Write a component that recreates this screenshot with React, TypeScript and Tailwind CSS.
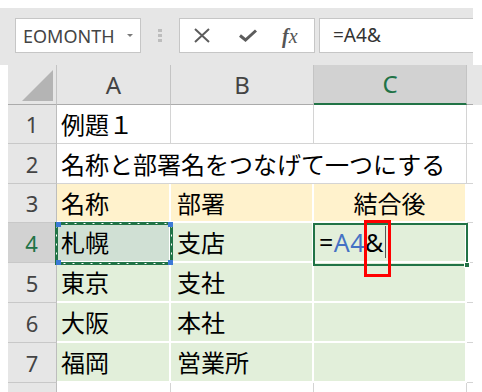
const GREEN = "#217346";

const CJK = "font-['Noto_Sans_CJK_JP','Noto_Sans',sans-serif]";
const UI = "font-['Noto_Sans','Open_Sans',sans-serif]";

type Row = {
  n: number;
  h: string;
  kind: "plain" | "head" | "data";
  a?: string;
  b?: string;
};

const rows: Row[] = [
  { n: 1, h: "h-[39px]", kind: "plain", a: "例題１" },
  { n: 2, h: "h-[40px]", kind: "plain" },
  { n: 3, h: "h-[39px]", kind: "head", a: "名称", b: "部署" },
  { n: 4, h: "h-[40px]", kind: "data", a: "札幌", b: "支店" },
  { n: 5, h: "h-[40px]", kind: "data", a: "東京", b: "支社" },
  { n: 6, h: "h-[40px]", kind: "data", a: "大阪", b: "本社" },
  { n: 7, h: "h-[40px]", kind: "data", a: "福岡", b: "営業所" },
];

const COLS = "grid grid-cols-[49px_114px_143px_153px_6px]";

const App = () => {
  return (
    <div className="relative w-[482px] h-[392px] overflow-hidden bg-white pt-2">
      <FormulaBar />
      <Sheet />
    </div>
  );
};

export default App;

/* ================= FORMULA BAR ================= */
const FormulaBar = () => {
  return (
    <div className="flex w-[473px] h-[57px] overflow-hidden bg-[#e6e6e6] pt-[10px]">
      <div className="ml-[15px] flex w-[126px] h-[35px] shrink-0 items-center border border-[#c6c6c6] bg-white pl-[7px]">
        <span className={`${UI} text-[18px] leading-none text-[#444]`}>EOMONTH</span>
        <span className="ml-auto mr-[7px] h-0 w-0 border-x-[3px] border-t-[3px] border-x-transparent border-t-[#7a7a7a]" />
      </div>

      <div className="flex w-[38px] h-[35px] shrink-0 flex-col items-center justify-center gap-[2px]">
        <span className="h-[3px] w-[4px] bg-[#bdbdbd]" />
        <span className="h-[3px] w-[4px] bg-[#bdbdbd]" />
        <span className="h-[3px] w-[4px] bg-[#bdbdbd]" />
      </div>

      <div className="flex w-[136px] h-[35px] shrink-0 items-center border border-[#c6c6c6] bg-white">
        <svg width="18" height="15" viewBox="0 0 18 15" className="ml-[13px]">
          <path d="M2 1 L16 14 M16 1 L2 14" stroke="#5c5c5c" strokeWidth="2" fill="none" />
        </svg>
        <svg width="20" height="13" viewBox="0 0 20 13" className="ml-[27px]">
          <path d="M2 6.5 L7.5 11 L18 1.5" stroke="#5c5c5c" strokeWidth="3" fill="none" />
        </svg>
        <span className="ml-[24px] font-['Liberation_Serif',serif] text-[20px] italic leading-none text-[#555]">
          <span className="font-bold">f</span>x
        </span>
      </div>

      <div className="ml-[4px] flex w-[170px] h-[35px] shrink-0 items-center border border-[#c6c6c6] bg-white pl-[13px]">
        <span className={`${UI} text-[19px] leading-none text-[#333]`}>=A4&amp;</span>
      </div>
    </div>
  );
};

/* ================= SHEET ================= */
const Sheet = () => {
  return (
    <div className="relative w-[482px] pl-2">
      <div className={`${COLS} h-[40px] bg-[#e6e6e6]`}>
        <div className="border-r border-b border-r-[#c4c4c4] border-b-[#ababab]">
          <svg width="48" height="39" viewBox="0 0 48 39">
            <polygon points="14,36 45,5 45,36" fill="#b4b4b4" />
          </svg>
        </div>
        <ColHead label="A" />
        <ColHead label="B" />
        <div className="flex items-center justify-center border-r border-r-[#c4c4c4] border-b-2 border-b-[#217346] bg-[#d2d2d2]">
          <span className={`${UI} text-[24px] leading-none text-[#217346]`}>C</span>
        </div>
        <div className="border-b border-b-[#ababab]" />
      </div>

      {rows.map((row) => (
        <SheetRow key={row.n} row={row} />
      ))}

      <div className={`${COLS} h-[12px]`}>
        <div className="border-r border-r-[#bdbdbd] bg-[#e6e6e6]" />
        <div className="border-r border-r-[#d4d4d4]" />
        <div className="border-r border-r-[#d4d4d4]" />
        <div className="border-r border-r-[#d4d4d4]" />
        <div />
      </div>

      {/* copy marquee on A4 */}
      <svg
        width="118"
        height="43"
        viewBox="0 0 118 43"
        className="absolute left-[55px] top-[157px]"
      >
        <rect x="1.5" y="1.5" width="115" height="40" fill="none" stroke={GREEN} strokeWidth="3" />
        <rect x="1.5" y="1.5" width="115" height="40" fill="none" stroke="#fff" strokeWidth="1" strokeDasharray="2 7" />
        <rect x="1" y="0" width="5" height="5" fill="#3b79d6" />
        <rect x="113" y="0" width="5" height="5" fill="#3b79d6" />
        <rect x="1" y="38" width="5" height="5" fill="#3b79d6" />
        <rect x="113" y="38" width="5" height="5" fill="#3b79d6" />
      </svg>

      {/* active cell C4 */}
      <div className="pointer-events-none absolute left-[313px] top-[158px] h-[43px] w-[155px] border-2 border-[#217346]">
        <span className="absolute -right-[4px] -bottom-[4px] h-[6px] w-[6px] border border-white bg-[#217346]" />
      </div>

      {/* highlight box */}
      <div className="pointer-events-none absolute left-[364px] top-[155px] h-[57px] w-[27px] border-[3px] border-[#ff0000]" />
    </div>
  );
};

const ColHead = ({ label }: { label: string }) => (
  <div className="flex items-center justify-center border-r border-b border-r-[#c4c4c4] border-b-[#ababab]">
    <span className={`${UI} text-[24px] leading-none text-[#444]`}>{label}</span>
  </div>
);

const SheetRow = ({ row }: { row: Row }) => {
  const active = row.n === 4;
  const fill =
    row.kind === "head" ? "bg-[#fff2cc]" : row.kind === "data" ? "bg-[#e2efda]" : "bg-white";
  const line =
    row.kind === "plain" ? "border-r border-b border-[#d4d4d4]" : "border-r-2 border-b-2 border-white";
  const text = `${CJK} text-[24px] leading-none text-black`;

  return (
    <div className={`${COLS} ${row.h}`}>
      <div
        className={`flex items-center justify-center border-b border-b-[#c8c8c8] ${
          active ? "border-r-2 border-r-[#217346] bg-[#d2d2d2]" : "border-r border-r-[#bdbdbd] bg-[#e6e6e6]"
        }`}
      >
        <span className={`${UI} text-[22px] leading-none ${active ? "text-[#217346]" : "text-[#444]"}`}>
          {row.n}
        </span>
      </div>

      {row.n === 2 ? (
        <div className={`col-span-3 flex items-center pl-[4px] ${line}`}>
          <span className={text}>名称と部署名をつなげて一つにする</span>
        </div>
      ) : (
        <>
          <div className={`flex items-center pl-[4px] ${active ? "bg-[#d0e0d4]" : fill} ${line}`}>
            <span className={text}>{row.a}</span>
          </div>
          <div className={`flex items-center pl-[6px] ${fill} ${line}`}>
            <span className={text}>{row.b}</span>
          </div>
          <div
            className={`flex items-center ${row.n === 3 ? "justify-center" : "pl-[5px]"} ${fill} ${line}`}
          >
            {row.n === 3 && <span className={text}>結合後</span>}
            {active && (
              <span className={`${UI} flex items-center text-[25px] tracking-[0.5px] leading-none text-black`}>
                =<span className="text-[#4472c4]">A4</span>&amp;
                <span className="ml-[1px] inline-block h-[32px] w-px bg-[#555]" />
              </span>
            )}
          </div>
        </>
      )}

      <div className="border-b border-b-[#d4d4d4] bg-white" />
    </div>
  );
};
